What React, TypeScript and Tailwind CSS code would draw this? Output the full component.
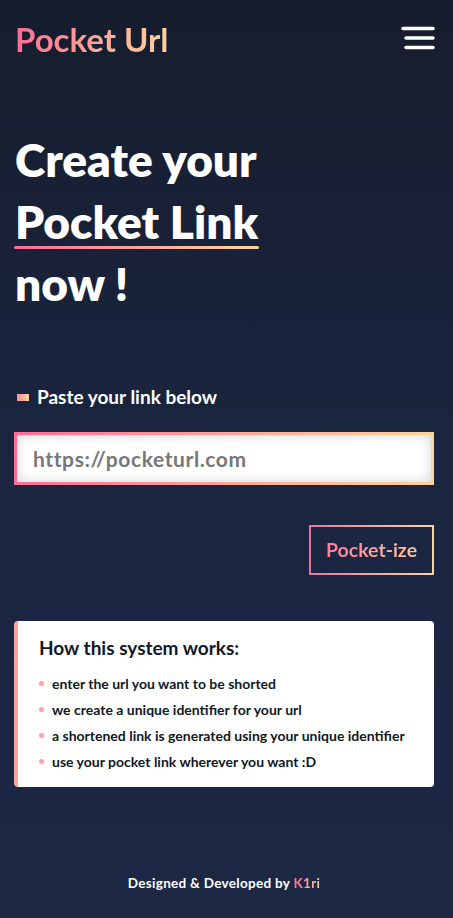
import React from "react"

const font = { fontFamily: "Lato, 'Noto Sans', sans-serif" }

const steps = [
  "enter the url you want to be shorted",
  "we create a unique identifier for your url",
  "a shortened link is generated using your unique identifier",
  "use your pocket link wherever you want :D",
]

function Burger() {
  return (
    <svg width="34" height="26" viewBox="0 0 34 26" fill="none" stroke="white" strokeWidth="3.5" strokeLinecap="round">
      <line x1="2" y1="2.5" x2="32" y2="2.5" />
      <line x1="5" y1="12" x2="32" y2="12" />
      <line x1="5" y1="21.5" x2="32" y2="21.5" />
    </svg>
  )
}

export default function App() {
  return (
    <div
      style={font}
      className="flex min-h-[918px] w-full flex-col bg-gradient-to-b from-[#161d2d] via-[#1a2540] to-[#1c2844] text-white"
    >
      <header className="flex items-center justify-between pl-[15px] pr-[18px] pt-[19px]">
        <h1 className="bg-gradient-to-r from-[#ff6b95] to-[#ffd39a] bg-clip-text text-[33px] font-bold leading-[40px] text-transparent">
          Pocket Url
        </h1>
        <Burger />
      </header>

      <section className="mt-[70px] px-[15px]">
        <h2 className="text-[46px] font-extrabold leading-[62px]">
          Create your
          <br />
          <span className="relative inline-block">
            Pocket Link
            <span className="absolute bottom-[4px] left-[-1px] right-[-1px] h-[3px] rounded-full bg-gradient-to-r from-[#ff6b95] to-[#ffd39a]" />
          </span>
          <br />
          now !
        </h2>
      </section>

      <section className="mt-[68px] pl-[14px] pr-[19px]">
        <div className="flex items-center gap-[8px] pl-[3px]">
          <span className="h-[7px] w-[12px] bg-gradient-to-r from-[#ff8aa0] to-[#ffd39a]" />
          <span className="text-[19px] font-bold">Paste your link below</span>
        </div>
        <div className="mt-[20px] bg-gradient-to-r from-[#ff6b95] to-[#ffd39a] p-[3px]">
          <input
            placeholder="https://pocketurl.com"
            className="h-[47px] w-full bg-white px-[16px] text-[21px] font-bold tracking-[0.6px] text-[#555] shadow-[inset_0_0_12px_rgba(0,0,0,0.18)] outline-none placeholder:text-[#777]"
          />
        </div>
        <div className="mt-[40px] flex justify-end">
          <button className="bg-gradient-to-r from-[#ff6b95] to-[#ffd39a] p-[2px]">
            <span className="flex h-[46px] w-[121px] items-center justify-center bg-[#1b2642]">
              <span className="bg-gradient-to-r from-[#ff7a9a] to-[#ffc59c] bg-clip-text text-[19.5px] font-bold text-transparent">
                Pocket-ize
              </span>
            </span>
          </button>
        </div>
      </section>

      <section className="mt-[46px] pl-[14px] pr-[19px]">
        <div className="rounded-[4px] border-l-[4px] border-[#ffa39c] bg-white px-[21px] pb-[15px] pt-[15px] text-[#111827]">
          <h3 className="text-[19px] font-bold leading-[24px]">How this system works:</h3>
          <ul className="mt-[14px] flex flex-col gap-[6px]">
            {steps.map((s) => (
              <li key={s} className="flex items-center gap-[8px] text-[14px] font-bold leading-[20px]">
                <span className="h-[5px] w-[5px] shrink-0 rounded-full bg-[#ffa39c]" />
                {s}
              </li>
            ))}
          </ul>
        </div>
      </section>

      <footer className="mt-auto pb-[25px] pl-[14px] pr-[19px] text-center text-[13.5px] font-bold tracking-[0.3px]">
        Designed &amp; Developed by{" "}
        <span className="bg-gradient-to-r from-[#ff6b95] to-[#ffd39a] bg-clip-text text-transparent">K1ri</span>
      </footer>
    </div>
  )
}
